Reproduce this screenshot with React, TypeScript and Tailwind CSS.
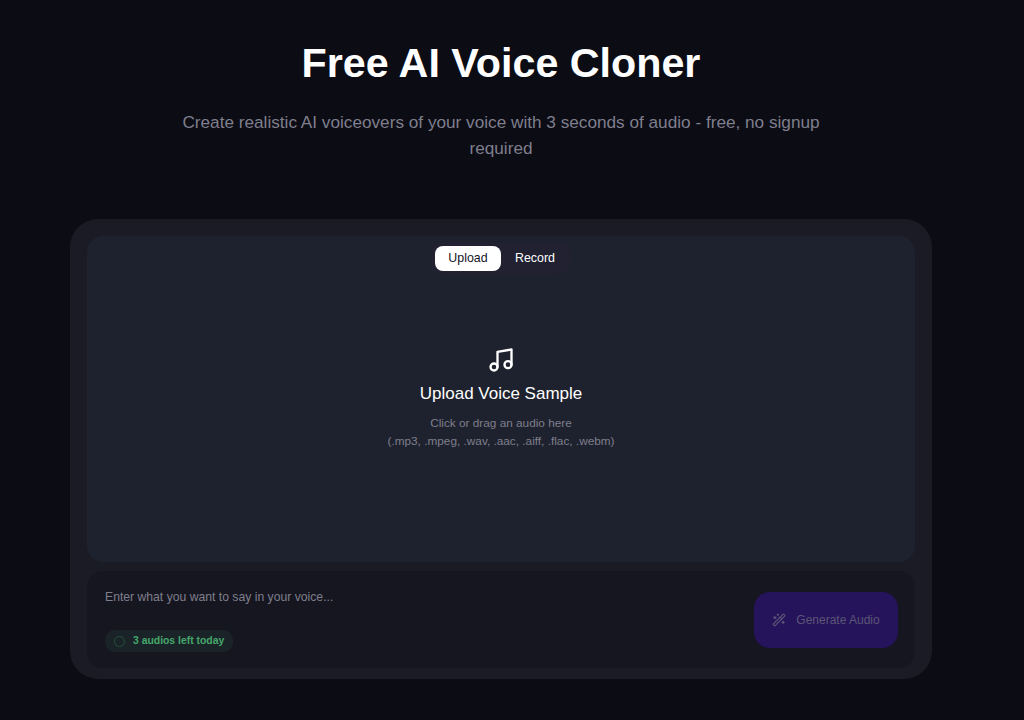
import { Music, WandSparkles } from 'lucide-react';

export default function App() {
  return (
    <div className="h-[720px] overflow-hidden bg-[#0c0c15] font-['Liberation_Sans',Arial,sans-serif]">
      <div className="ml-[70px] w-[862px] pt-[37px]">
        {/* 제목 */}
        <h1 className="text-center text-[41.25px] leading-[52px] font-bold text-white">Free AI Voice Cloner</h1>
        <p className="mx-auto mt-[20px] w-[650px] text-center text-[17.2px] leading-[26px] font-light text-[#7f7f8c]">
          Create realistic AI voiceovers of your voice with 3 seconds of audio - free, no signup required
        </p>

        <div className="mt-[58px] flex h-[460px] flex-col gap-[9px] rounded-[28px] bg-[#1b1b26] p-[17px] pb-[11px]">
          {/* 업로드 영역 */}
          <div className="flex h-[326px] flex-col items-center rounded-2xl bg-[#1e222e] pt-[6px]">
            <div className="flex h-[32px] w-[140px] items-center gap-[1px] rounded-xl bg-[#212131] pl-[4px]">
              <button className="h-[25px] w-[66px] rounded-lg bg-white text-[12.4px] text-[#15151f]">Upload</button>
              <button className="h-[25px] w-[66px] text-[12.4px] text-white">Record</button>
            </div>
            <Music className="mt-[72px] text-white" size={28} strokeWidth={2} />
            <h2 className="mt-[6px] text-[17px] leading-[28px] font-medium text-white">Upload Voice Sample</h2>
            <p className="mt-[6px] text-center text-[11.8px] leading-[18px] text-[#7f7f8c]">
              Click or drag an audio here
              <br />
              (.mp3, .mpeg, .wav, .aac, .aiff, .flac, .webm)
            </p>
          </div>

          {/* 입력 영역 */}
          <div className="flex h-[97px] items-start justify-between rounded-2xl bg-[#161620] pt-[20px] pr-[17px] pl-[18px]">
            <div>
              <p className="text-[12.2px] leading-[12px] text-[#7f7f8c]">Enter what you want to say in your voice...</p>
              <div className="mt-[27px] flex h-[22px] w-[128px] items-center gap-[8px] rounded-[10px] bg-[#1a2428] pl-[9px]">
                <span className="size-[11px] rounded-full border border-[#27503a]"></span>
                <span className="text-[10.4px] font-bold text-[#46a76b]">3 audios left today</span>
              </div>
            </div>
            <button className="mt-[1px] flex h-[56px] w-[144px] items-center justify-center gap-[10px] rounded-2xl bg-[#25135c] text-xs text-[#5c5675]">
              <WandSparkles size={14} />
              Generate Audio
            </button>
          </div>
        </div>
      </div>
    </div>
  );
}
